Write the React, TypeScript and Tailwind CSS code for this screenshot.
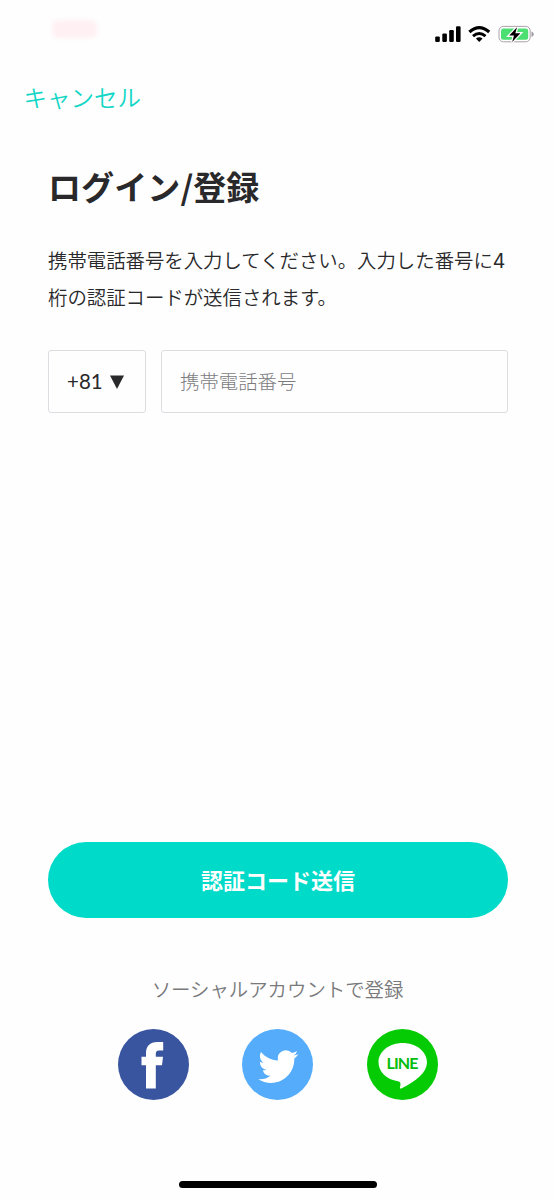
import { useState } from 'react';

const StatusBar = () => (
  <header className="flex h-[68px] items-start justify-between pl-[52px] pr-[20px]">
    <div className="mt-[20px] h-[18px] w-[45px] rounded-md bg-[#fff0f3] blur-[2px]" />
    <svg className="mt-[20px]" width="102" height="28" viewBox="433 20 102 28" fill="none">
      {/* Signal */}
      <rect x="435.2" y="36.4" width="4.6" height="5.6" rx="1.2" fill="#000" />
      <rect x="442.3" y="33.6" width="4.6" height="8.4" rx="1.2" fill="#000" />
      <rect x="449.2" y="30" width="4.6" height="12" rx="1.2" fill="#000" />
      <rect x="456" y="26.2" width="4.6" height="15.8" rx="1.2" fill="#000" />

      {/* Wi-Fi */}
      <path d="M469.4 32Q479.2 23.2 489.2 32" stroke="#000" strokeWidth="3.2" />
      <path d="M473 36.2Q479.2 30.7 485.5 36.2" stroke="#000" strokeWidth="3" />
      <path d="M475.9 38.5Q479.2 35.9 482.6 38.5L479.2 42Z" fill="#000" />

      {/* Battery */}
      <rect x="499" y="26.4" width="31.2" height="15.4" rx="4.4" stroke="#aaa2a9" strokeWidth="1" />
      <rect x="501" y="28.4" width="27.2" height="11.4" rx="2.5" fill="#4cdf72" />
      <path d="M531.5 31.5Q533.7 32 533.7 34.2T531.5 37Z" fill="#9c989d" />
      <path d="M517 27.3L509.2 35.6H514L512.2 41.9L520.4 33.2H515.4Z" fill="#000" stroke="#fff" strokeWidth="2.6" paintOrder="stroke" />
    </svg>
  </header>
);

const FacebookIcon = () => (
  <svg width="71" height="71" viewBox="0 0 71 71">
    <circle cx="35.5" cy="35.5" r="35.5" fill="#3955a0" />
    <path d="M28 59.5V36.2H23.5V27.7H28V24.5C28 17 32 13 39.2 13H45.2V21.5H41C38.5 21.5 37.8 22.8 37.8 25V27.7H45L44 36.2H37.8V59.5Z" fill="#fff" />
  </svg>
);

const TwitterIcon = () => (
  <svg width="71" height="71" viewBox="0 0 71 71">
    <circle cx="35.5" cy="35.5" r="35.5" fill="#55acfa" />
    <path
      transform="translate(16.3 17.6) scale(1.67)"
      d="M23.953 4.57a10 10 0 01-2.825.775 4.958 4.958 0 002.163-2.723c-.951.555-2.005.959-3.127 1.184a4.92 4.92 0 00-8.384 4.482C7.69 8.095 4.067 6.13 1.64 3.162a4.822 4.822 0 00-.666 2.475c0 1.71.87 3.213 2.188 4.096a4.904 4.904 0 01-2.228-.616v.06a4.923 4.923 0 003.946 4.827 4.996 4.996 0 01-2.212.085 4.936 4.936 0 004.604 3.417 9.867 9.867 0 01-6.102 2.105c-.39 0-.779-.023-1.17-.067a13.995 13.995 0 007.557 2.209c9.053 0 13.998-7.496 13.998-13.985 0-.21 0-.42-.015-.63A9.935 9.935 0 0024 4.59z"
      fill="#fff"
    />
  </svg>
);

const LineIcon = () => (
  <svg width="71" height="71" viewBox="0 0 71 71">
    <circle cx="35.5" cy="35.5" r="35.5" fill="#04cb04" />
    <path d="M35.7 14C49 14 60 22.4 60 33.3C60 43.7 48.8 52.5 34.3 59.4C32.8 60 32.7 59.2 33.4 56.2C33.8 53.8 33.2 52.7 31 52.2C19.5 50.7 11.5 43 11.5 33.3C11.5 22.4 22.4 14 35.7 14Z" fill="#fff" />
    <text x="35.5" y="39.6" textAnchor="middle" textLength="32" className="font-['Lato'] text-[16px] font-bold" fill="#04bd0c">LINE</text>
  </svg>
);

const App = () => {
  const [phone, setPhone] = useState<string>('');

  return (
    <div className="flex h-[1200px] w-[555px] flex-col bg-[#fefefe] font-['Noto_Sans_CJK_JP',sans-serif] text-[#29292b]">
      <StatusBar />

      <nav className="flex h-[60px] items-center pl-[23.5px]">
        <button className="pb-px text-[23.5px] font-[350] leading-none text-[#12d6c6]">キャンセル</button>
      </nav>

      <main className="flex flex-1 flex-col pl-[48px] pr-[47px]">
        <h1 className="mt-[34px] text-[33px] font-bold leading-[48px] tracking-[0.1px]">ログイン/登録</h1>
        <p className="mt-[31px] whitespace-nowrap text-[19.4px] font-[350] leading-[37px]">
          携帯電話番号を入力してください。入力した番号に<span className="font-['Inter'] font-normal leading-none">4</span>
          <br />
          桁の認証コードが送信されます。
        </p>

        <div className="mt-[35px] flex gap-[15px]">
          <button className="flex h-[63px] w-[98px] items-center gap-[7px] rounded-[3px] border border-[#dddce1] pl-[18px]">
            <span className="font-['Lato'] text-[20.5px]">+81</span>
            <svg width="14" height="14" viewBox="0 0 14 14">
              <path d="M0 0.5H14L7 14Z" fill="currentColor" />
            </svg>
          </button>
          <input
            type="tel"
            value={phone}
            onChange={(e) => setPhone(e.target.value)}
            placeholder="携帯電話番号"
            className="h-[63px] min-w-0 flex-1 rounded-[3px] border border-[#dddce1] px-[18px] pb-[2px] text-[19.4px] font-light outline-none placeholder:text-[#7c7c7e]"
          />
        </div>

        <button className="mt-auto h-[76px] shrink-0 rounded-full bg-[#00dac8] pb-[2px] text-[22px] font-bold text-white">認証コード送信</button>
      </main>

      <footer className="flex h-[282px] shrink-0 flex-col items-center">
        <p className="mt-[57px] text-[19.4px] font-[350] leading-[28px] text-[#79797b]">ソーシャルアカウントで登録</p>
        <div className="mt-[26px] flex gap-[53.5px]">
          <button aria-label="Facebook"><FacebookIcon /></button>
          <button aria-label="Twitter"><TwitterIcon /></button>
          <button aria-label="LINE"><LineIcon /></button>
        </div>
        <div className="mb-[12px] mt-auto h-[7px] w-[198px] rounded-full bg-black" />
      </footer>
    </div>
  );
};

export default App;
